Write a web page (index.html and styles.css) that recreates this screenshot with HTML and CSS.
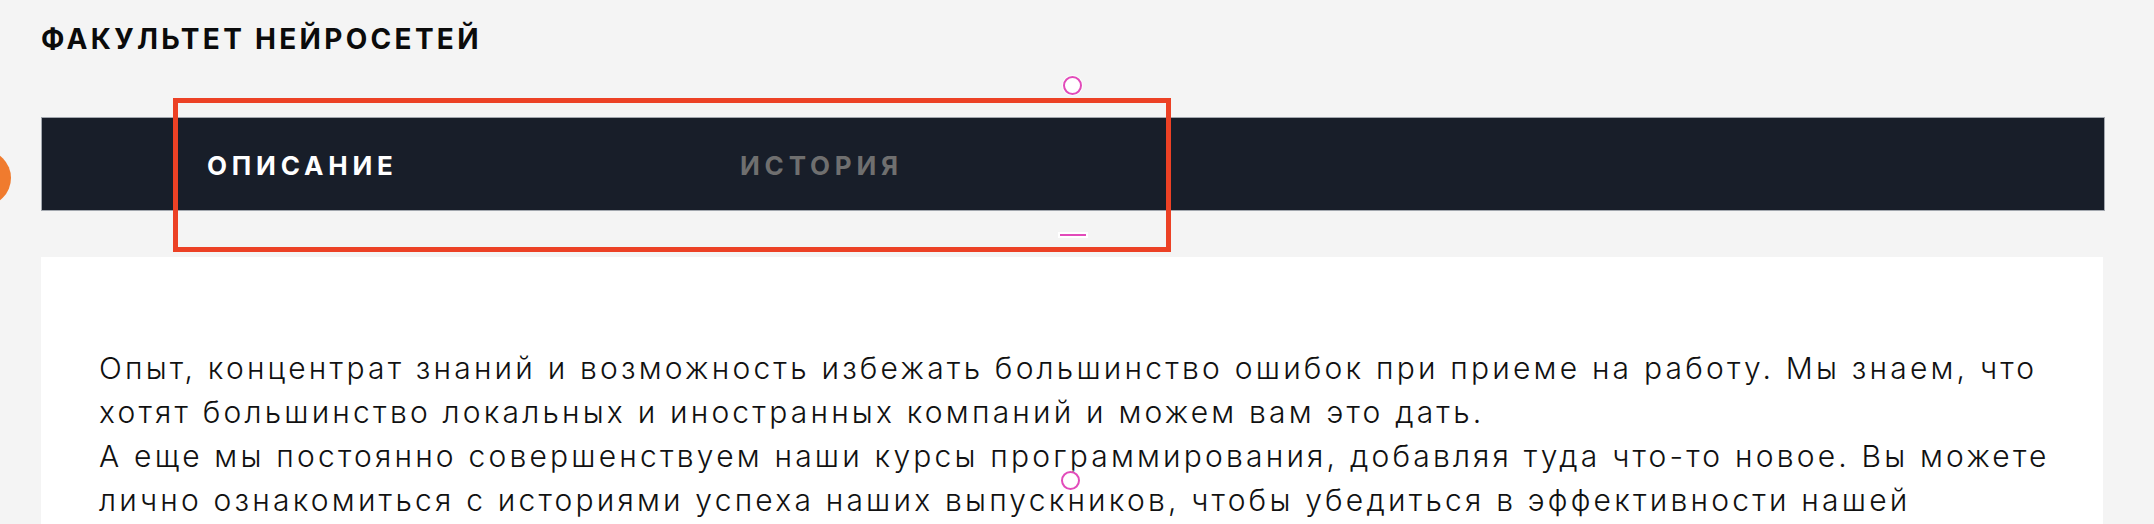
FILE: index.html
```html
<!DOCTYPE html>
<html lang="ru">
<head>
<meta charset="utf-8">
<title>Факультет нейросетей</title>
<link rel="stylesheet" href="styles.css">
</head>
<body>
<div class="page">
  <h1 class="title">ФАКУЛЬТЕТ НЕЙРОСЕТЕЙ</h1>
  <nav class="tabs">
    <a class="tab tab-active">ОПИСАНИЕ</a>
    <a class="tab">ИСТОРИЯ</a>
  </nav>
  <section class="panel">
    <p>Опыт, концентрат знаний и возможность избежать большинство ошибок при приеме на работу. Мы знаем, что хотят большинство локальных и иностранных компаний и можем вам это дать.</p>
    <p>А еще мы постоянно совершенствуем наши курсы программирования, добавляя туда что-то новое. Вы можете лично ознакомиться с историями успеха наших выпускников, чтобы убедиться в эффективности нашей методики обучения.</p>
  </section>
</div>
<div class="dot-orange"></div>
<div class="select-box"></div>
<div class="handle handle-top"></div>
<div class="handle-line"></div>
<div class="handle handle-mid"></div>
</body>
</html>
```
FILE: styles.css
```css
html, body {
  margin: 0;
  padding: 0;
}
body {
  background: #f4f4f4;
  font-family: "Inter", "Noto Sans", sans-serif;
  overflow: hidden;
  height: 524px;
  position: relative;
}
.page {
  padding: 0 49px 0 41px;
}
.title {
  margin: 19px 0 58px;
  font-size: 28px;
  line-height: 40px;
  font-weight: 700;
  letter-spacing: 3.3px;
  color: #0b0b0b;
}
.tabs {
  display: grid;
  grid-template-columns: 533px 533px;
  align-items: center;
  box-sizing: border-box;
  height: 94px;
  padding: 4px 0 0 165px;
  background: #181e29;
  border: 1px solid #a2a7ae;
}
.tab {
  font-size: 26px;
  font-weight: 700;
  letter-spacing: 4.8px;
  color: #6f6f6f;
  line-height: 1;
}
.tab-active {
  color: #ffffff;
}
.panel {
  margin-top: 46px;
  width: 2062px;
  box-sizing: border-box;
  background: #ffffff;
  padding: 89px 40px 40px 58px;
}
.panel p {
  margin: 0;
  font-size: 30px;
  line-height: 44px;
  font-weight: 300;
  color: #111111;
  letter-spacing: 3.2px;
}
.dot-orange {
  position: absolute;
  left: -45px;
  top: 150px;
  width: 56px;
  height: 56px;
  border-radius: 50%;
  background: #f07b2e;
}
.select-box {
  position: absolute;
  left: 173px;
  top: 98px;
  width: 998px;
  height: 154px;
  box-sizing: border-box;
  border: 5px solid #ec4125;
}
.handle {
  position: absolute;
  width: 19px;
  height: 19px;
  box-sizing: border-box;
  border: 2px solid #e24bba;
  border-radius: 50%;
  background: #ffffff;
  box-shadow: 0 0 0 1px rgba(255,255,255,0.8);
}
.handle-top {
  left: 1063px;
  top: 76px;
}
.handle-mid {
  left: 1061px;
  top: 471px;
  background: transparent;
}
.handle-line {
  position: absolute;
  left: 1058px;
  top: 232px;
  width: 30px;
  height: 6px;
  background: #ffffff;
}
.handle-line::after {
  content: "";
  position: absolute;
  left: 2px;
  right: 2px;
  top: 2px;
  height: 2px;
  background: #e24bba;
}
```
